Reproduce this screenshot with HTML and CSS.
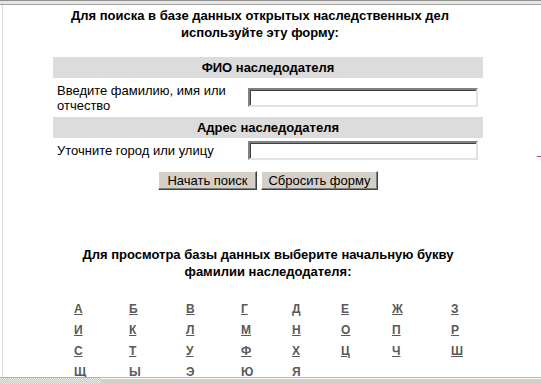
FILE: index.html
```html
<!DOCTYPE html>
<html lang="ru">
<head>
    <meta charset="UTF-8">
    <title>Поиск наследственных дел</title>
    <link rel="stylesheet" href="styles.css">
</head>
<body>
    <div class="frame-top"></div>
    <div class="frame">
        <div class="page">
            <h2 class="title title-first">Для поиска в базе данных открытых наследственных дел используйте эту форму:</h2>

            <form class="search">
                <div class="section">ФИО наследодателя</div>
                <div class="row row-tall">
                    <label for="fio">Введите фамилию, имя или отчество</label>
                    <input type="text" id="fio">
                </div>
                <div class="section">Адрес наследодателя</div>
                <div class="row">
                    <label for="addr">Уточните город или улицу</label>
                    <input type="text" id="addr">
                </div>
                <div class="buttons">
                    <button type="submit" class="btn btn-search">Начать поиск</button>
                    <button type="reset" class="btn btn-reset">Сбросить форму</button>
                </div>
            </form>

            <h2 class="title title-second">Для просмотра базы данных выберите начальную букву фамилии наследодателя:</h2>
        </div>

        <div class="letters">
            <a href="#">А</a><a href="#">Б</a><a href="#">В</a><a href="#">Г</a>
            <a href="#">Д</a><a href="#">Е</a><a href="#">Ж</a><a href="#">З</a>
            <a href="#">И</a><a href="#">К</a><a href="#">Л</a><a href="#">М</a>
            <a href="#">Н</a><a href="#">О</a><a href="#">П</a><a href="#">Р</a>
            <a href="#">С</a><a href="#">Т</a><a href="#">У</a><a href="#">Ф</a>
            <a href="#">Х</a><a href="#">Ц</a><a href="#">Ч</a><a href="#">Ш</a>
            <a href="#">Щ</a><a href="#">Ы</a><a href="#">Э</a><a href="#">Ю</a>
            <a href="#">Я</a>
        </div>
        <span class="mark"></span>
    </div>
    <div class="frame-bottom">
        <div class="hatch"></div>
        <div class="bar"></div>
    </div>
</body>
</html>
```

FILE: styles.css
```css
/* Reset */
* {
    margin: 0;
    padding: 0;
    box-sizing: border-box;
}
body {
    font-family: 'Liberation Sans', Arial, sans-serif;
    font-size: 13px;
    color: #000;
    background: #fff;
    width: 541px;
    height: 384px;
    overflow: hidden;
}
.frame-top {
    height: 5px;
    background: #d4d0c8;
    border-bottom: 1px solid #a0a0a0;
    box-shadow: inset 0 -3px 0 #e8e6e0, inset 0 -4px 0 #909090;
}
.frame {
    position: relative;
    height: 372px;
    border-left: 1px solid #d8d8d8;
    margin-left: 2px;
    overflow: hidden;
}
.page {
    width: 430px;
    margin-left: 50px;
}
.title {
    font-size: 13px;
    font-weight: bold;
    text-align: center;
    line-height: 17px;
}
.title-first {
    padding-top: 2px;
    margin-right: 16px;
    margin-bottom: 16px;
}
.title-second {
    margin-top: 56px;
}
.section {
    background: #dcdcdc;
    font-weight: bold;
    text-align: center;
    height: 21px;
    line-height: 21px;
}
.row {
    display: grid;
    grid-template-columns: 191px 230px;
    align-items: center;
    height: 24px;
    padding-left: 4px;
}
.row-tall {
    height: 39px;
}
.row label {
    line-height: 15px;
    padding-top: 1px;
}
.row input {
    width: 230px;
    height: 19px;
    border: 2px solid;
    border-color: #808080 #e4e2dc #e4e2dc #808080;
    box-shadow: inset 1px 1px 0 #404040;
    background: #fff;
    font: 13px 'Liberation Sans', Arial, sans-serif;
}
.buttons {
    display: flex;
    justify-content: center;
    gap: 4px;
    margin-top: 9px;
}
.btn {
    font: 13px 'Liberation Sans', Arial, sans-serif;
    color: #000;
    background: #d4d0c8;
    height: 19px;
    border: 1px solid;
    border-color: #fff #404040 #404040 #fff;
    box-shadow: inset -1px -1px 0 #808080;
    cursor: pointer;
}
.btn-search {
    width: 99px;
}
.btn-reset {
    width: 117px;
}
.letters {
    display: grid;
    grid-template-columns: 55px 57px 55px 51px 49px 51px 59px 57px;
    grid-auto-rows: 21px;
    align-items: center;
    margin-left: 71px;
    margin-top: 18px;
}
.letters a {
    color: #595959;
    font-weight: bold;
    font-size: 12px;
    line-height: 14px;
    text-decoration: underline;
}
.mark {
    position: absolute;
    left: 534px;
    top: 151px;
    width: 5px;
    height: 1px;
    background: #d04050;
}
.frame-bottom {
    display: flex;
    height: 7px;
    border-top: 1px solid #b8b4ac;
}
.hatch {
    width: 101px;
    background: repeating-conic-gradient(#c8c4bc 0 25%, #f0eee8 0 50%) 0 0 / 2px 2px;
}
.bar {
    flex: 1;
    background: #d4d0c8;
    border-top: 1px solid #fff;
}
```
